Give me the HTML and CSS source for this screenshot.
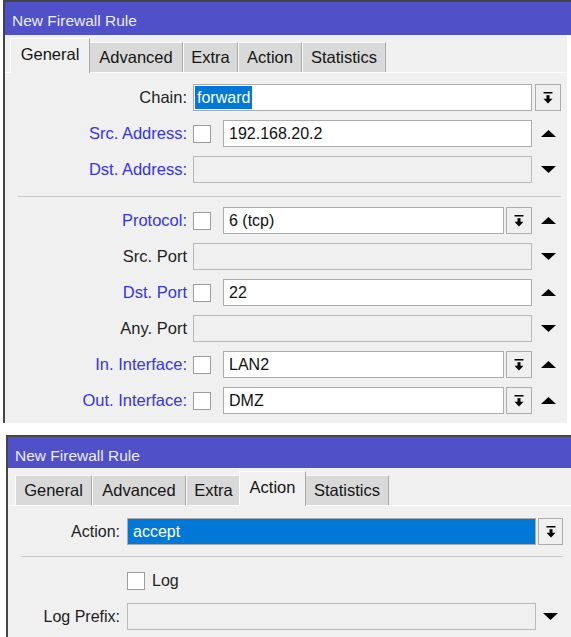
FILE: index.html
```html
<!DOCTYPE html>
<html>
<head>
<meta charset="utf-8">
<title>New Firewall Rule</title>
<link rel="stylesheet" href="styles.css">
</head>
<body>
<div class="win win1">
  <div class="titlebar">New Firewall Rule</div>
  <div class="wbody">
    <div class="tabs">
      <div class="tab t-general active">General</div>
      <div class="tab t-advanced">Advanced</div>
      <div class="tab t-extra">Extra</div>
      <div class="tab t-action">Action</div>
      <div class="tab t-stats">Statistics</div>
    </div>
    <div class="panel">
      <div class="row">
        <div class="lbl">Chain:</div>
        <div class="ctl"><div class="field chain"><span class="sel">forward</span></div></div>
        <div class="side"><div class="btn"><svg class="dd" width="10" height="12" viewBox="0 0 10 12"><rect x="0.5" y="0" width="9" height="1.5" fill="#000"/><rect x="3.5" y="3.2" width="3" height="3.8" fill="#000"/><polygon points="0.5,6.8 9.5,6.8 5,11.5" fill="#000"/></svg></div></div>
      </div>
      <div class="row">
        <div class="lbl blue">Src. Address:</div>
        <div class="ctl"><div class="cb"></div><div class="field">192.168.20.2</div></div>
        <div class="side"><svg width="15" height="7" viewBox="0 0 15 7"><polygon points="0,7 15,7 7.5,0" fill="#000"/></svg></div>
      </div>
      <div class="row">
        <div class="lbl blue">Dst. Address:</div>
        <div class="ctl"><div class="field off"></div></div>
        <div class="side"><svg width="15" height="7" viewBox="0 0 15 7"><polygon points="0,0 15,0 7.5,7" fill="#000"/></svg></div>
      </div>
      <div class="sep"></div>
      <div class="row">
        <div class="lbl blue">Protocol:</div>
        <div class="ctl"><div class="cb"></div><div class="field">6 (tcp)</div><div class="btn"><svg class="dd" width="10" height="12" viewBox="0 0 10 12"><rect x="0.5" y="0" width="9" height="1.5" fill="#000"/><rect x="3.5" y="3.2" width="3" height="3.8" fill="#000"/><polygon points="0.5,6.8 9.5,6.8 5,11.5" fill="#000"/></svg></div></div>
        <div class="side"><svg width="15" height="7" viewBox="0 0 15 7"><polygon points="0,7 15,7 7.5,0" fill="#000"/></svg></div>
      </div>
      <div class="row">
        <div class="lbl">Src. Port</div>
        <div class="ctl"><div class="field off"></div></div>
        <div class="side"><svg width="15" height="7" viewBox="0 0 15 7"><polygon points="0,0 15,0 7.5,7" fill="#000"/></svg></div>
      </div>
      <div class="row">
        <div class="lbl blue">Dst. Port</div>
        <div class="ctl"><div class="cb"></div><div class="field">22</div></div>
        <div class="side"><svg width="15" height="7" viewBox="0 0 15 7"><polygon points="0,7 15,7 7.5,0" fill="#000"/></svg></div>
      </div>
      <div class="row">
        <div class="lbl">Any. Port</div>
        <div class="ctl"><div class="field off"></div></div>
        <div class="side"><svg width="15" height="7" viewBox="0 0 15 7"><polygon points="0,0 15,0 7.5,7" fill="#000"/></svg></div>
      </div>
      <div class="row">
        <div class="lbl blue">In. Interface:</div>
        <div class="ctl"><div class="cb"></div><div class="field">LAN2</div><div class="btn"><svg class="dd" width="10" height="12" viewBox="0 0 10 12"><rect x="0.5" y="0" width="9" height="1.5" fill="#000"/><rect x="3.5" y="3.2" width="3" height="3.8" fill="#000"/><polygon points="0.5,6.8 9.5,6.8 5,11.5" fill="#000"/></svg></div></div>
        <div class="side"><svg width="15" height="7" viewBox="0 0 15 7"><polygon points="0,7 15,7 7.5,0" fill="#000"/></svg></div>
      </div>
      <div class="row">
        <div class="lbl blue">Out. Interface:</div>
        <div class="ctl"><div class="cb"></div><div class="field">DMZ</div><div class="btn"><svg class="dd" width="10" height="12" viewBox="0 0 10 12"><rect x="0.5" y="0" width="9" height="1.5" fill="#000"/><rect x="3.5" y="3.2" width="3" height="3.8" fill="#000"/><polygon points="0.5,6.8 9.5,6.8 5,11.5" fill="#000"/></svg></div></div>
        <div class="side"><svg width="15" height="7" viewBox="0 0 15 7"><polygon points="0,7 15,7 7.5,0" fill="#000"/></svg></div>
      </div>
    </div>
  </div>
</div>

<div class="win win2">
  <div class="titlebar">New Firewall Rule</div>
  <div class="wbody">
    <div class="tabs">
      <div class="tab t-general">General</div>
      <div class="tab t-advanced">Advanced</div>
      <div class="tab t-extra">Extra</div>
      <div class="tab t-action active">Action</div>
      <div class="tab t-stats">Statistics</div>
    </div>
    <div class="panel">
      <div class="row">
        <div class="lbl">Action:</div>
        <div class="ctl"><div class="field selall">accept</div></div>
        <div class="side"><div class="btn"><svg class="dd" width="10" height="12" viewBox="0 0 10 12"><rect x="0.5" y="0" width="9" height="1.5" fill="#000"/><rect x="3.5" y="3.2" width="3" height="3.8" fill="#000"/><polygon points="0.5,6.8 9.5,6.8 5,11.5" fill="#000"/></svg></div></div>
      </div>
      <div class="sep"></div>
      <div class="row">
        <div class="lbl"></div>
        <div class="ctl"><div class="cb cb-log"></div><span class="cbtext">Log</span></div>
        <div class="side"></div>
      </div>
      <div class="row">
        <div class="lbl">Log Prefix:</div>
        <div class="ctl"><div class="field off"></div></div>
        <div class="side"><svg width="15" height="7" viewBox="0 0 15 7"><polygon points="0,0 15,0 7.5,7" fill="#000"/></svg></div>
      </div>
    </div>
  </div>
</div>
</body>
</html>
```
FILE: styles.css
```css
* { box-sizing: border-box; }
html, body { margin: 0; padding: 0; background: #fff; }
body {
  font-family: "Liberation Sans", Arial, sans-serif;
  color: #1a1a1a;
  width: 571px;
  overflow: hidden;
}

.win {
  border-left: 2px solid #454545;
  border-top: 2px solid #454545;
  background: #fff;
}
.win1 { margin-left: 3px; }
.win2 { margin-left: 6px; margin-top: 12px; }

.titlebar {
  background: #5050c8;
  color: #ececff;
  font-size: 15.5px;
  height: 33px;
  padding: 5px 0 0 7px;
  display: flex;
  align-items: center;
}
.win2 .titlebar { height: 31px; padding-top: 6px; }

.wbody { background: #f0f0f0; }
.win1 .wbody { margin-right: 4px; }

.tabs {
  display: flex;
  align-items: flex-end;
  height: 38px;
  padding-left: 7px;
  border-bottom: 1px solid #fdfdfd;
}
.tab {
  height: 30px;
  display: flex;
  align-items: center;
  justify-content: center;
  background: #d9d9d9;
  border-left: 1px solid #fbfbfb;
  border-top: 1px solid #fbfbfb;
  border-right: 1px solid #a9a9a9;
  font-size: 16.5px;
  color: #151515;
  flex: none;
}
.tab.active {
  height: 35px;
  margin: 0 -1px -1px -2px;
  padding-bottom: 4px;
  background: #f0f0f0;
  border-left-color: #fff;
  border-top-color: #fff;
  position: relative;
  z-index: 1;
}
.t-general { width: 77px; }
.t-advanced { width: 94px; }
.t-extra { width: 55px; }
.t-action { width: 64px; }
.t-stats { width: 84px; }
.t-general.active { width: 80px; }
.t-action.active { width: 67px; }

.panel {
  display: flex;
  flex-direction: column;
  gap: 9px;
  padding: 11px 6px 9px 0;
}
.win2 .panel { padding: 12px 8px 20px 0; }

.row {
  display: flex;
  align-items: center;
  height: 27px;
}
.lbl {
  width: 182px;
  margin-right: 6px;
  text-align: right;
  font-size: 16.5px;
  white-space: nowrap;
  flex: none;
  color: #1e1e1e;
}
.win2 .lbl { width: 112px; margin-right: 7px; font-size: 16px; }
.lbl.blue { color: #3434ee; }

.ctl {
  flex: 1;
  display: flex;
  align-items: center;
  height: 100%;
  min-width: 0;
}
.side {
  width: 26px;
  margin-left: 3px;
  height: 100%;
  display: flex;
  align-items: center;
  justify-content: center;
  flex: none;
}
.win2 .side { width: 25px; margin-left: 2px; }

.field {
  flex: 1;
  height: 100%;
  border: 1px solid #acacac;
  background: #fff;
  display: flex;
  align-items: center;
  padding-left: 5px;
  font-size: 16px;
  color: #111;
  white-space: nowrap;
}
.field.off { background: #f0f0f0; border-color: #b9b9b9; }
.field.chain { padding: 1px; }
.sel {
  align-self: stretch;
  display: flex;
  align-items: center;
  padding: 0 2px;
  background: #0078d7;
  color: #fff;
}
.field.selall { background: #0078d7; color: #fff; }

.cb {
  width: 18px;
  height: 18px;
  border: 1px solid #9c9c9c;
  background: #fff;
  margin-right: 12px;
  flex: none;
}
.cb-log { margin-right: 7px; }
.cbtext { font-size: 16px; color: #1e1e1e; }

.btn {
  width: 26px;
  height: 100%;
  border: 1px solid #acacac;
  background: #f0f0f0;
  display: flex;
  align-items: center;
  justify-content: center;
  flex: none;
}
.win2 .btn { width: 25px; }
.ctl .btn { margin-left: 2px; }

.sep {
  height: 1px;
  background: #c9c9c9;
  margin: 4px 0 1px 13px;
}
.win2 .sep { margin: 2px 0 1px 13px; }
```
